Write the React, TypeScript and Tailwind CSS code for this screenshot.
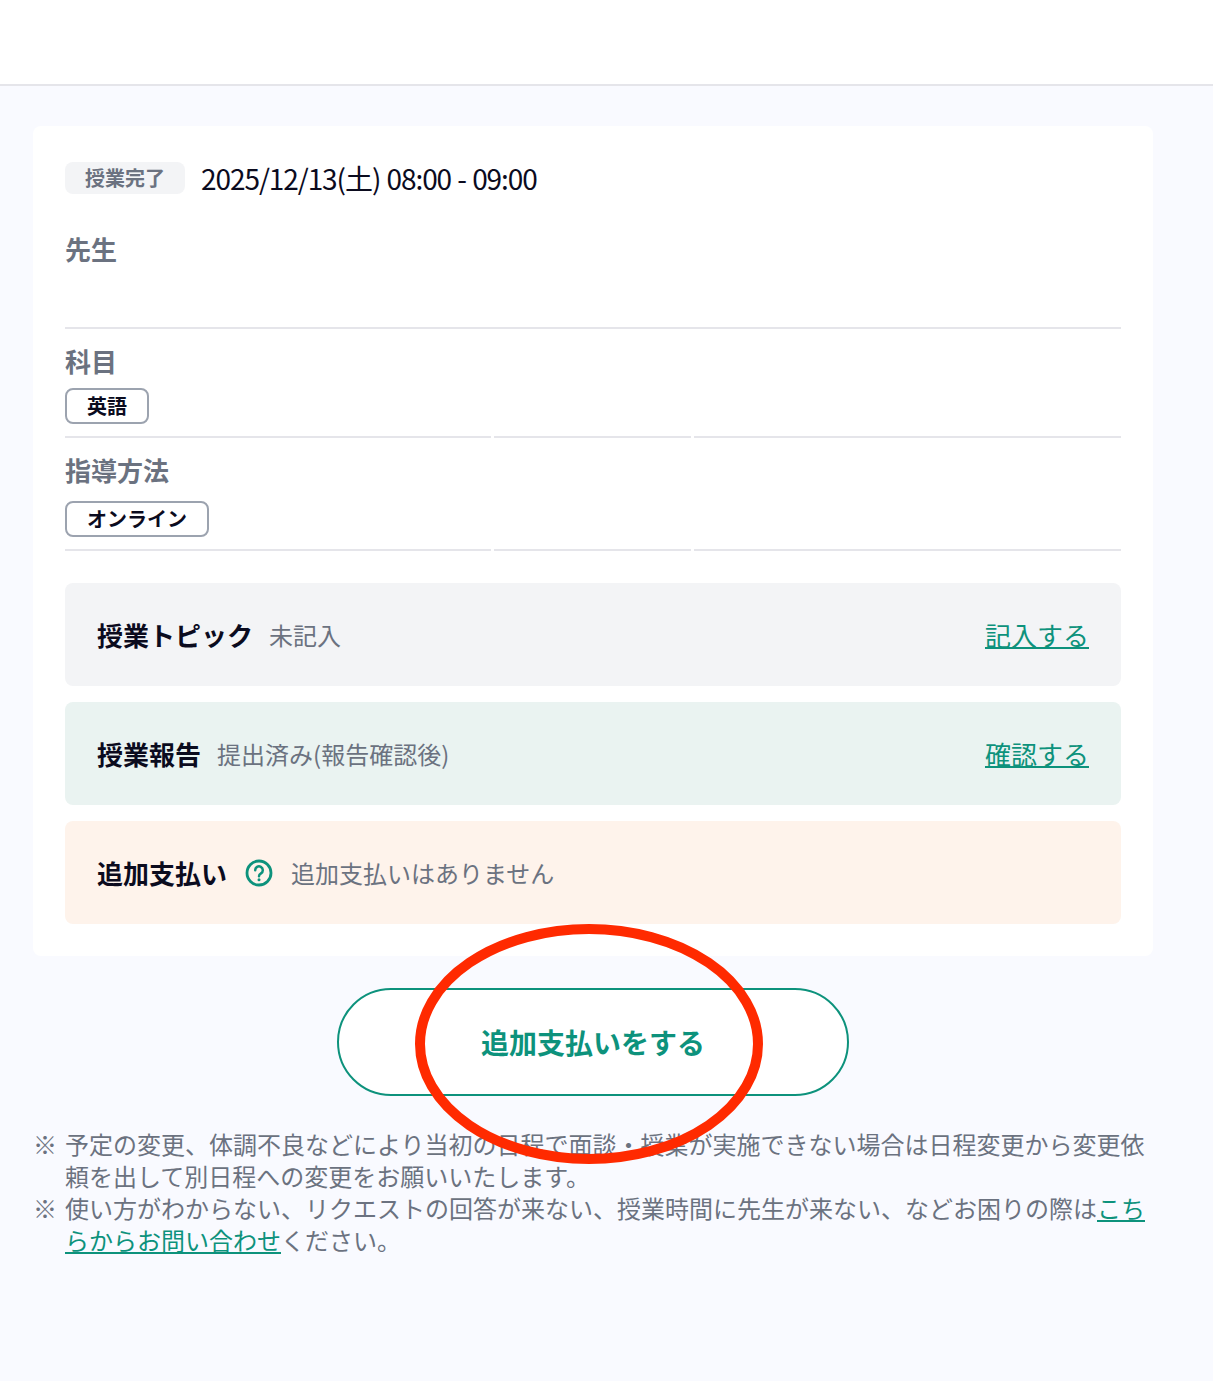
import React from 'react';

const Divider: React.FC = () => (
  <div className="flex gap-[3px]">
    <div className="h-[2px] w-[426px] bg-[#e5e5ea]" />
    <div className="h-[2px] w-[197px] bg-[#e5e5ea]" />
    <div className="h-[2px] flex-1 bg-[#e5e5ea]" />
  </div>
);

const Tag: React.FC<{ label: string; width: string }> = ({ label, width }) => (
  <span className={`flex h-9 items-center justify-center rounded-lg border-2 border-[#9ca3af] bg-white text-[20px] leading-none font-bold text-[#0b0b1e] ${width}`}>
    {label}
  </span>
);

const Panel: React.FC<{ bg: string; children: React.ReactNode }> = ({ bg, children }) => (
  <div className={`flex h-[103px] items-center rounded-lg px-8 ${bg}`}>{children}</div>
);

const App: React.FC = () => {
  return (
    <div className="relative min-h-[1381px] bg-[#f9faff] font-['Noto_Sans_CJK_JP','Noto_Sans',sans-serif] text-[#0b0b1e]">
      {/* Header */}
      <header className="h-[86px] border-b-2 border-[#e5e5ea] bg-white" />

      <main className="px-[33px] pt-[40px]">
        {/* Lesson card */}
        <section className="w-[1120px] rounded-lg bg-white px-8 pt-9 pb-8">
          <div className="flex h-8 items-center gap-4">
            <span className="flex h-8 w-[120px] items-center justify-center rounded-lg bg-[#f3f4f6] text-[20px] leading-none font-bold text-[#6b7280]">
              授業完了
            </span>
            <span className="text-[28px] leading-none tracking-[-1.07px] [word-spacing:1px]">2025/12/13(土) 08:00 - 09:00</span>
          </div>

          <h3 className="mt-[37px] text-[26px] leading-[36px] font-bold text-[#6b7280]">先生</h3>
          <div className="mt-[60px] h-[2px] bg-[#e5e5ea]" />

          <h3 className="mt-[14px] text-[26px] leading-[36px] font-bold text-[#6b7280]">科目</h3>
          <div className="mt-[9px] flex">
            <Tag label="英語" width="w-[84px]" />
          </div>
          <div className="mt-3">
            <Divider />
          </div>

          <h3 className="mt-[14px] text-[26px] leading-[36px] font-bold text-[#6b7280]">指導方法</h3>
          <div className="mt-[13px] flex">
            <Tag label="オンライン" width="w-[144px]" />
          </div>
          <div className="mt-3">
            <Divider />
          </div>

          <div className="mt-8 flex flex-col gap-4">
            <Panel bg="bg-[#f3f4f6]">
              <strong className="text-[26px] font-bold">授業トピック</strong>
              <span className="ml-4 text-[24px] text-[#6b7280]">未記入</span>
              <a className="ml-auto text-[26px] text-[#0d927c] underline decoration-2 underline-offset-1">記入する</a>
            </Panel>
            <Panel bg="bg-[#eaf3f1]">
              <strong className="text-[26px] font-bold">授業報告</strong>
              <span className="ml-4 text-[24px] text-[#6b7280]">提出済み(報告確認後)</span>
              <a className="ml-auto text-[26px] text-[#0d927c] underline decoration-2 underline-offset-1">確認する</a>
            </Panel>
            <Panel bg="bg-[#fef3eb]">
              <strong className="text-[26px] font-bold">追加支払い</strong>
              <svg viewBox="0 0 28 28" fill="none" className="ml-[18px] h-7 w-7 text-[#0d927c]">
                <circle cx="14" cy="14" r="12" stroke="currentColor" strokeWidth="2.8" />
                <path d="M10.2 11.2a3.8 3.8 0 1 1 5.8 3.2c-1.3.8-2 1.5-2 2.8" stroke="currentColor" strokeWidth="2.5" strokeLinecap="round" />
                <circle cx="14" cy="20.8" r="1.5" fill="currentColor" />
              </svg>
              <span className="ml-[18px] text-[24px] text-[#6b7280]">追加支払いはありません</span>
            </Panel>
          </div>
        </section>

        {/* Action */}
        <div className="mt-8 flex w-[1120px] justify-center">
          <button className="h-[108px] w-[512px] rounded-full border-2 border-[#0d927c] bg-white text-[28px] font-bold text-[#0d927c]">
            追加支払いをする
          </button>
        </div>

        {/* Notes */}
        <ul className="mt-[32px] w-[1120px] text-[24px] leading-[32px] text-[#6b7280]">
          <li className="flex">
            <span className="w-8 shrink-0">※</span>
            <span>予定の変更、体調不良などにより当初の日程で面談・授業が実施できない場合は日程変更から変更依頼を出して別日程への変更をお願いいたします。</span>
          </li>
          <li className="flex">
            <span className="w-8 shrink-0">※</span>
            <span>
              使い方がわからない、リクエストの回答が来ない、授業時間に先生が来ない、などお困りの際は
              <a className="text-[#0d927c] underline">こちらからお問い合わせ</a>
              ください。
            </span>
          </li>
        </ul>
      </main>

      {/* Hand drawn marker over the screenshot */}
      <svg viewBox="0 0 348 240" fill="none" className="absolute top-[924px] left-[415px] h-[240px] w-[348px]">
        <ellipse cx="174" cy="120" rx="169" ry="115" stroke="#ff2a00" strokeWidth="10" />
      </svg>
    </div>
  );
};

export default App;
